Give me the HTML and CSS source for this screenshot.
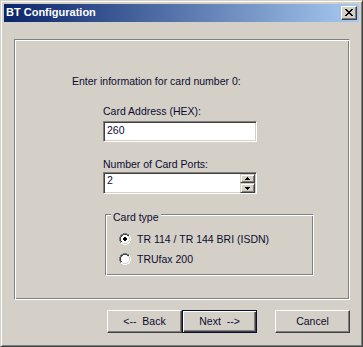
FILE: index.html
```html
<!DOCTYPE html>
<html>
<head>
<meta charset="utf-8">
<title>BT Configuration</title>
<link rel="stylesheet" href="styles.css">
</head>
<body>
<div class="window">
  <div class="titlebar">
    <span class="title">BT Configuration</span>
    <button class="close" aria-label="Close">
      <svg width="8" height="7" viewBox="0 0 8 7" shape-rendering="crispEdges"><path d="M0 0h2v1H0zM6 0h2v1H6zM1 1h2v1H1zM5 1h2v1H5zM2 2h4v1H2zM3 3h2v1H3zM2 4h4v1H2zM1 5h2v1H1zM5 5h2v1H5zM0 6h2v1H0zM6 6h2v1H6z" fill="#000"/></svg>
    </button>
  </div>
  <div class="client">
    <div class="panel">
      <p class="intro">Enter information for card number 0:</p>
      <div class="field field-addr">
        <label class="lbl">Card Address (HEX):</label>
        <div class="edit"><span class="val">260</span></div>
      </div>
      <div class="field field-ports">
        <label class="lbl">Number of Card Ports:</label>
        <div class="edit spin">
          <span class="val">2</span>
          <div class="spinbtns">
            <div class="sbtn"><svg width="5" height="3" viewBox="0 0 5 3"><path d="M2 0h1v1h1v1h1v1H0V2h1V1h1z" fill="#000"/></svg></div>
            <div class="sbtn"><svg width="5" height="3" viewBox="0 0 5 3"><path d="M0 0h5v1H4v1H3v1H2V2H1V1H0z" fill="#000"/></svg></div>
          </div>
        </div>
      </div>
      <div class="group">
        <div class="legend">Card type</div>
        <div class="radio-row">
          <svg class="radio" width="12" height="12" viewBox="0 0 12 12">
            <path d="M4 0h4v1h2v1h1v2h1v4h-1v2h-1v1H8v1H4v-1H2v-1H1V8H0V4h1V2h1V1h2z" fill="#fff"/>
            <path d="M4 0h4v1H4zM2 1h2v1H2zM8 1h2v1H8zM1 2h1v2H1zM0 4h1v4H0zM1 8h1v2H1z" fill="#808080"/>
            <path d="M4 1h4v1H4zM2 2h2v1H2zM8 2h2v1H8zM2 3h1v1H2zM1 4h1v4H1zM2 8h1v1H2z" fill="#404040"/>
            <path d="M10 2h1v2h-1zM11 4h1v4h-1zM10 8h1v2h-1zM8 10h2v1H8zM4 11h4v1H4zM2 10h2v1H2z" fill="#fff"/>
            <path d="M9 3h1v1H9zM10 4h1v4h-1zM9 8h1v1H9zM8 9h1v1H8zM4 10h4v1H4zM3 9h1v1H3z" fill="#d4d0c8"/>
            <path d="M5 4h2v1h1v2H7v1H5V7H4V5h1z" fill="#000"/>
          </svg>
          <span>TR 114 / TR 144 BRI (ISDN)</span>
        </div>
        <div class="radio-row">
          <svg class="radio" width="12" height="12" viewBox="0 0 12 12">
            <path d="M4 0h4v1h2v1h1v2h1v4h-1v2h-1v1H8v1H4v-1H2v-1H1V8H0V4h1V2h1V1h2z" fill="#fff"/>
            <path d="M4 0h4v1H4zM2 1h2v1H2zM8 1h2v1H8zM1 2h1v2H1zM0 4h1v4H0zM1 8h1v2H1z" fill="#808080"/>
            <path d="M4 1h4v1H4zM2 2h2v1H2zM8 2h2v1H8zM2 3h1v1H2zM1 4h1v4H1zM2 8h1v1H2z" fill="#404040"/>
            <path d="M10 2h1v2h-1zM11 4h1v4h-1zM10 8h1v2h-1zM8 10h2v1H8zM4 11h4v1H4zM2 10h2v1H2z" fill="#fff"/>
            <path d="M9 3h1v1H9zM10 4h1v4h-1zM9 8h1v1H9zM8 9h1v1H8zM4 10h4v1H4zM3 9h1v1H3z" fill="#d4d0c8"/>
          </svg>
          <span>TRUfax 200</span>
        </div>
      </div>
    </div>
    <div class="buttons">
      <button class="btn">&lt;--  Back</button>
      <button class="btn default">Next  --&gt;</button>
      <button class="btn cancel">Cancel</button>
    </div>
  </div>
</div>
</body>
</html>
```

FILE: styles.css
```css
html, body {
  margin: 0;
  padding: 0;
  background: #d4d0c8;
}

body {
  font-family: "Liberation Sans", Arial, sans-serif;
  font-size: 10.5px;
  line-height: 13px;
  color: #0c0c30;
}

.window {
  width: 363px;
  height: 347px;
  box-sizing: border-box;
  border: 1px solid;
  border-color: #d4d0c8 #404040 #404040 #d4d0c8;
  box-shadow: inset 1px 1px 0 #fff, inset -1px -1px 0 #808080;
  padding: 3px;
  background: #d4d0c8;
  display: flex;
  flex-direction: column;
}

.titlebar {
  height: 18px;
  background: linear-gradient(to right, #0a246a, #a6caf0);
  display: flex;
  align-items: flex-start;
  justify-content: space-between;
}

.title {
  color: #fff;
  font-weight: bold;
  font-size: 11px;
  line-height: 16px;
  padding-left: 2px;
}

.close {
  width: 16px;
  height: 14px;
  margin: 2px 2px 0 0;
  padding: 0;
  box-sizing: border-box;
  background: #d4d0c8;
  border: 1px solid;
  border-color: #fff #404040 #404040 #fff;
  box-shadow: inset -1px -1px 0 #808080;
  display: flex;
  align-items: center;
  justify-content: center;
}

.close svg {
  display: block;
  margin: 0 1px 1px 0;
}

.client {
  flex: 1;
  display: flex;
  flex-direction: column;
  padding: 17px 9px 0 10px;
}

.panel {
  height: 261px;
  box-sizing: border-box;
  border: 1px solid;
  border-color: #808080 #fff #fff #808080;
  box-shadow: inset 1px 1px 0 #fff, inset -1px -1px 0 #808080;
  display: flex;
  flex-direction: column;
}

.intro {
  margin: 35px 0 0 57px;
}

.field {
  margin-left: 88px;
  display: flex;
  flex-direction: column;
}

.field-addr {
  margin-top: 17px;
}

.field-ports {
  margin-top: 16px;
}

.lbl {
  display: block;
}

.edit {
  width: 154px;
  height: 21px;
  box-sizing: border-box;
  background: #fff;
  border: 1px solid;
  border-color: #808080 #fff #fff #808080;
  box-shadow: inset 1px 1px 0 #404040, inset -1px -1px 0 #d4d0c8;
  padding: 2px 2px 0 3px;
  display: flex;
  align-items: flex-start;
}

.field-addr .edit {
  margin-top: 3px;
}

.field-ports .edit {
  margin-top: 1px;
  height: 22px;
}

.val {
  flex: 1;
}

.spin {
  padding-right: 1px;
  padding-top: 1px;
}

.spinbtns {
  display: flex;
  flex-direction: column;
  width: 15px;
}

.sbtn {
  height: 9px;
  box-sizing: border-box;
  background: #d4d0c8;
  border: 1px solid;
  border-color: #d4d0c8 #404040 #404040 #d4d0c8;
  box-shadow: inset 1px 1px 0 #fff, inset -1px -1px 0 #808080;
  display: flex;
  align-items: center;
  justify-content: center;
}

.sbtn + .sbtn {
  height: 10px;
}

.sbtn svg {
  display: block;
}

.group {
  margin: 20px 0 0 90px;
  width: 209px;
  height: 62px;
  box-sizing: border-box;
  border: 1px solid;
  border-color: #808080 #fff #fff #808080;
  box-shadow: inset 1px 1px 0 #fff, inset -1px -1px 0 #808080;
}

.legend {
  width: fit-content;
  margin: -4px 0 0 5px;
  padding: 0 2px;
  background: #d4d0c8;
}

.radio-row {
  height: 20px;
  display: flex;
  align-items: center;
  gap: 6px;
  margin-left: 13px;
}

.legend + .radio-row {
  margin-top: 5px;
}

.radio {
  display: block;
  flex: none;
}

.buttons {
  display: flex;
  margin-top: 10px;
  margin-left: 93px;
}

.btn {
  width: 75px;
  height: 23px;
  box-sizing: border-box;
  padding: 0 0 1px;
  font-family: "Liberation Sans", Arial, sans-serif;
  font-size: 10.5px;
  line-height: 13px;
  color: #0c0c30;
  white-space: pre;
  background: #d4d0c8;
  border: 1px solid;
  border-color: #fff #404040 #404040 #fff;
  box-shadow: inset -1px -1px 0 #808080;
}

.btn.default {
  border: 1px solid #0c0c30;
  box-shadow: inset 1px 1px 0 #fff, inset -1px -1px 0 #404040, inset -2px -2px 0 #808080;
}

.btn.cancel {
  margin-left: 18px;
}
```
